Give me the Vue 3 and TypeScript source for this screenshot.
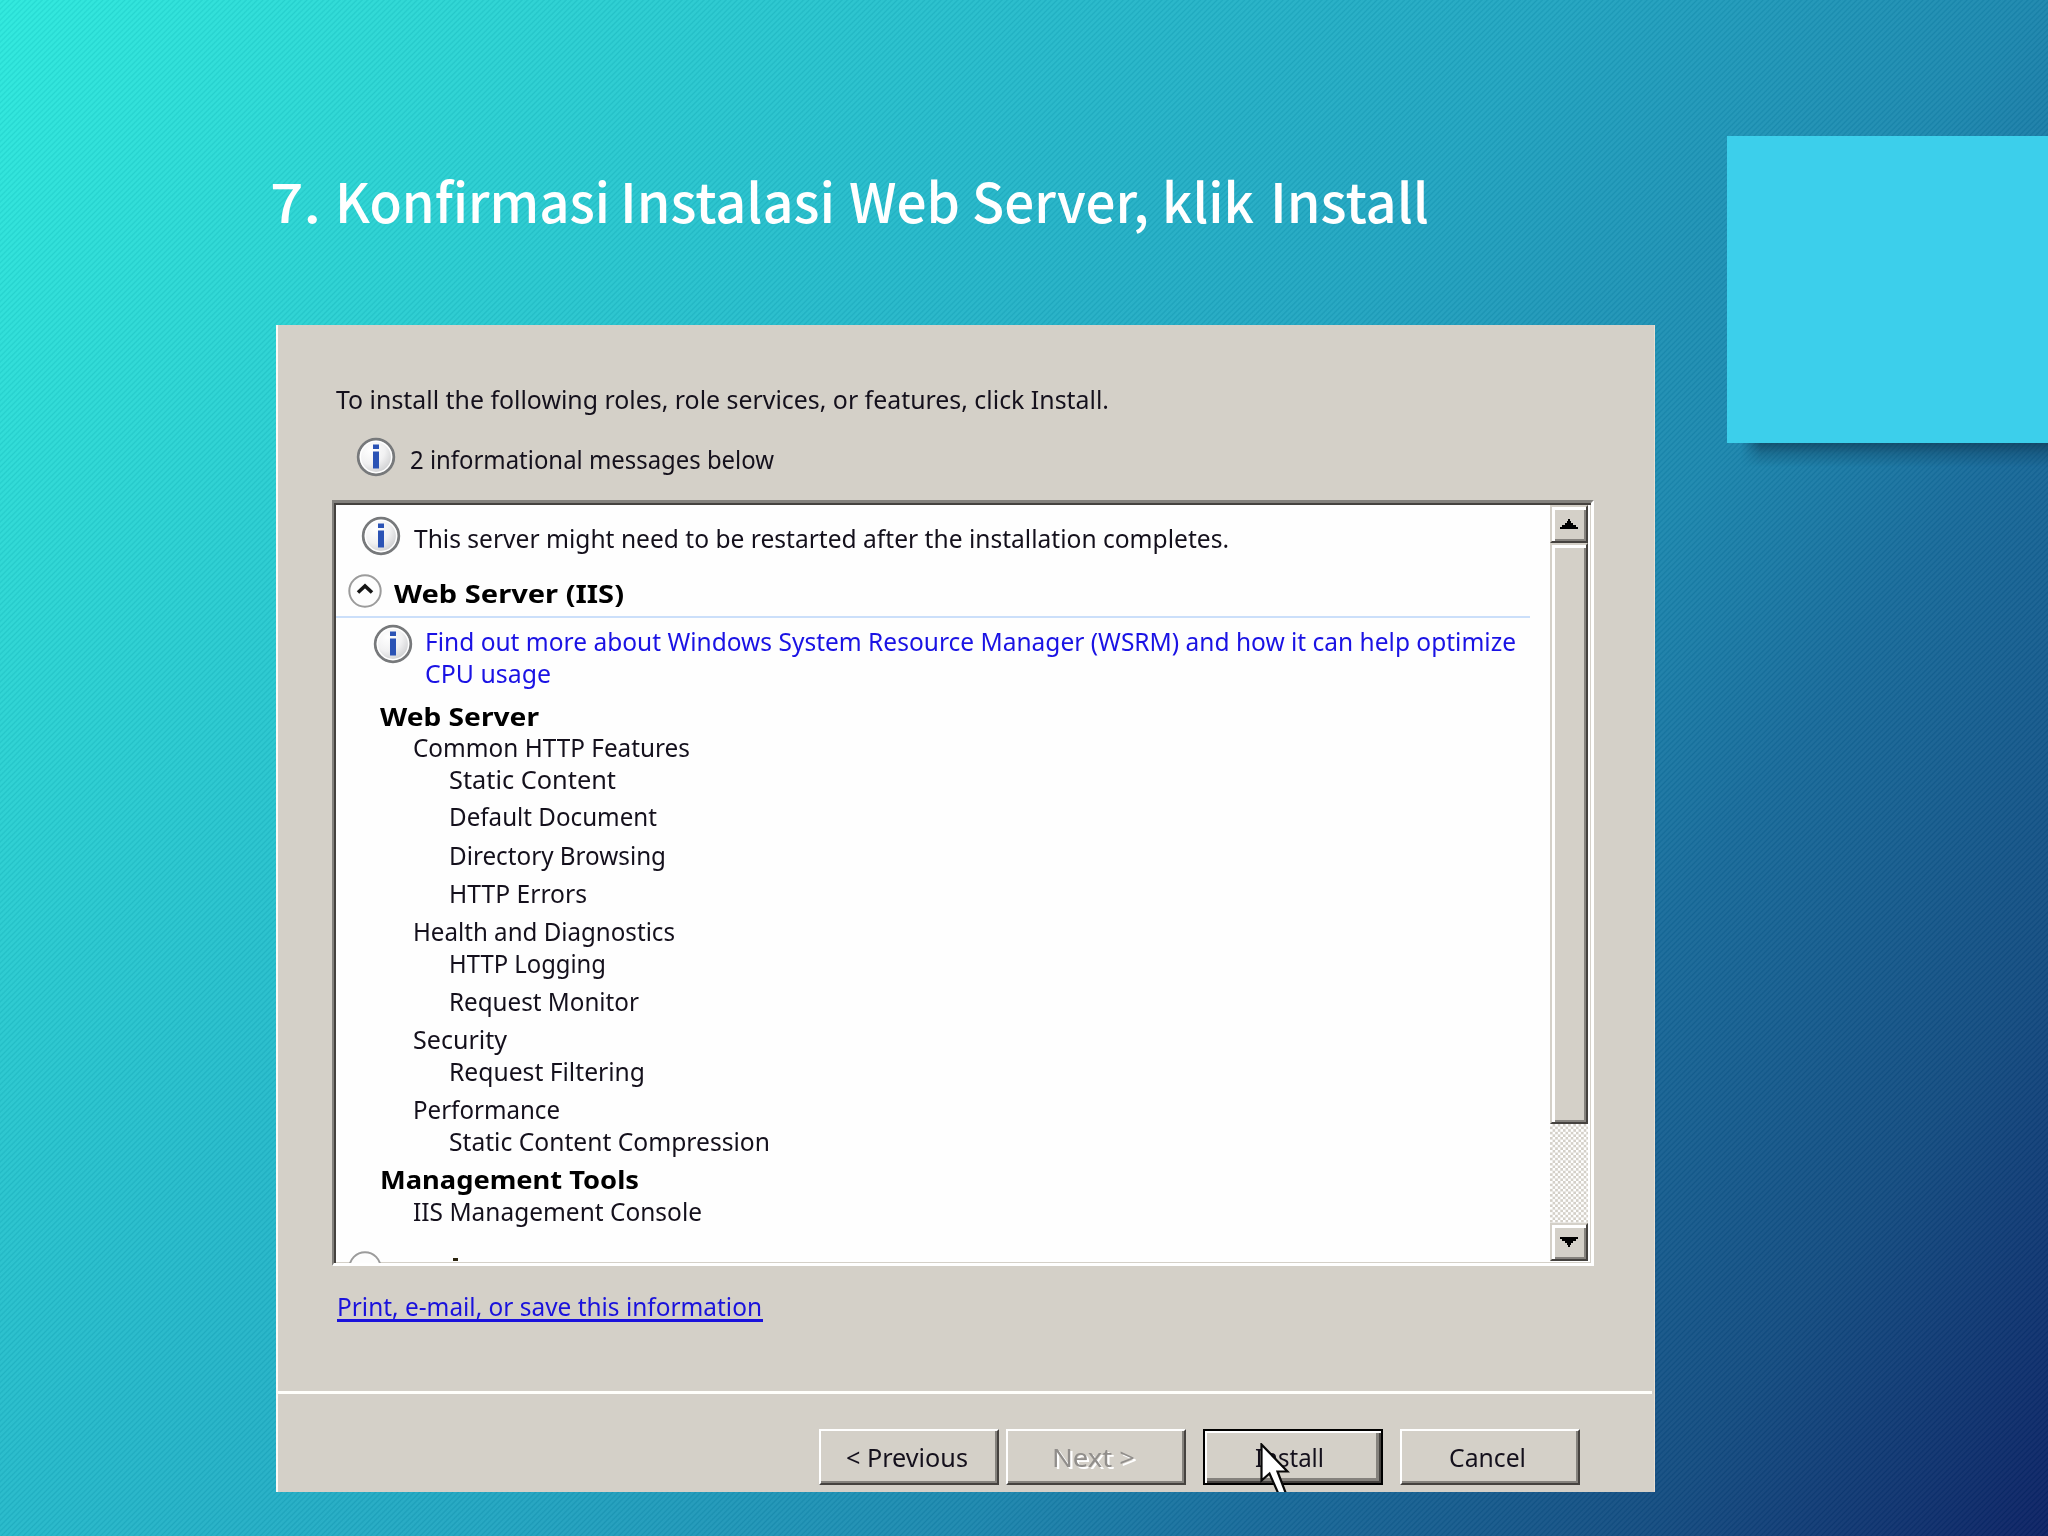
<script setup lang="ts">
import type { Directive } from 'vue'

interface Row {
  text: string
  width: number
  kind: 'group' | 'section' | 'leaf'
  tight?: boolean
}

interface Word {
  text: string
  width: number
  gap: number
}

// Stretches a single line of text to the given width in pixels.
const vFit: Directive<HTMLElement, number> = {
  mounted(el, binding) {
    const natural = el.getBoundingClientRect().width
    if (natural > 0) {
      el.style.transform = `scaleX(${binding.value / natural})`
      el.style.marginRight = `${binding.value - natural}px`
    }
  },
}

const heading: Word[] = [
  { text: '7.', width: 51, gap: 0 },
  { text: 'Konfirmasi', width: 275, gap: 14 },
  { text: 'Instalasi', width: 215, gap: 10 },
  { text: 'Web', width: 111, gap: 14 },
  { text: 'Server,', width: 177, gap: 12 },
  { text: 'klik', width: 92, gap: 13 },
  { text: 'Install', width: 159, gap: 16 },
]

const rows: Row[] = [
  { text: 'Common HTTP Features', width: 277, kind: 'section', tight: true },
  { text: 'Static Content', width: 167, kind: 'leaf', tight: true },
  { text: 'Default Document', width: 208, kind: 'leaf' },
  { text: 'Directory Browsing', width: 217, kind: 'leaf' },
  { text: 'HTTP Errors', width: 138, kind: 'leaf' },
  { text: 'Health and Diagnostics', width: 262, kind: 'section' },
  { text: 'HTTP Logging', width: 157, kind: 'leaf', tight: true },
  { text: 'Request Monitor', width: 190, kind: 'leaf' },
  { text: 'Security', width: 94, kind: 'section' },
  { text: 'Request Filtering', width: 196, kind: 'leaf', tight: true },
  { text: 'Performance', width: 147, kind: 'section' },
  { text: 'Static Content Compression', width: 321, kind: 'leaf', tight: true },
  { text: 'Management Tools', width: 259, kind: 'group' },
  { text: 'IIS Management Console', width: 289, kind: 'section', tight: true },
]
</script>

<template>
  <div class="slide">
    <svg class="defs" width="0" height="0">
      <defs>
        <radialGradient id="glass" cx="0.35" cy="0.3" r="0.8">
          <stop offset="0" stop-color="#ffffff" />
          <stop offset="0.5" stop-color="#f1f1f2" />
          <stop offset="1" stop-color="#c3c4c6" />
        </radialGradient>
        <symbol id="info" viewBox="0 0 40 40">
          <circle cx="20" cy="20" r="17.8" fill="url(#glass)" stroke="#77797b" stroke-width="2.8" />
          <circle cx="20" cy="20" r="15.6" fill="none" stroke="#ffffff" stroke-width="1.4" />
          <path d="M17 7.500h6v4.500h-6zM17 14.500h6v17h-6z" fill="#2b53b5" />
        </symbol>
      </defs>
    </svg>

    <h1 class="title">
      <div v-for="word in heading" :key="word.text" :style="{ marginLeft: word.gap + 'px' }">
        <span v-fit="word.width">{{ word.text }}</span>
      </div>
    </h1>
    <div class="accent"></div>

    <main class="dialog">
      <p class="lead"><span v-fit="773">To install the following roles, role services, or features, click Install.</span></p>
      <div class="notice">
        <svg class="info"><use href="#info" /></svg>
        <span v-fit="364">2 informational messages below</span>
      </div>

      <section class="box">
        <div class="content">
          <div class="restart">
            <svg class="info"><use href="#info" /></svg>
            <span v-fit="815">This server might need to be restarted after the installation completes.</span>
          </div>
          <div class="role">
            <svg class="chevron" viewBox="0 0 34 34">
              <circle cx="17" cy="17" r="15.700" fill="#fdfdfd" stroke="#9b9b9b" stroke-width="2" />
              <path d="M10 18.500l7-6.500 7 6.500" fill="none" stroke="#151515" stroke-width="3.600" />
            </svg>
            <span v-fit="230">Web Server (IIS)</span>
          </div>
          <div class="link-note">
            <svg class="info"><use href="#info" /></svg>
            <div class="lines">
              <div><span v-fit="1091">Find out more about Windows System Resource Manager (WSRM) and how it can help optimize</span></div>
              <div><span v-fit="126">CPU usage</span></div>
            </div>
          </div>
          <div class="rows">
            <div class="row group first"><span v-fit="159">Web Server</span></div>
            <div v-for="row in rows" :key="row.text" class="row" :class="[row.kind, { tight: row.tight }]">
              <span v-fit="row.width">{{ row.text }}</span>
            </div>
          </div>
          <div class="next-role">
            <svg class="chevron" viewBox="0 0 34 34">
              <circle cx="17" cy="17" r="15.700" fill="#fdfdfd" stroke="#9b9b9b" stroke-width="2" />
            </svg>
            <i class="speck"></i>
          </div>
        </div>
        <div class="scrollbar">
          <div class="raised arrow">
            <svg viewBox="0 0 18 10"><path d="M0 10V8h2V6h3V4h2V2h1V0h2v2h1v2h2v2h3v2h2v2z" /></svg>
          </div>
          <div class="raised thumb"></div>
          <div class="track"></div>
          <div class="raised arrow">
            <svg viewBox="0 0 18 10"><path d="M0 0v2h2v2h3v2h2v2h1v2h2V8h1V6h2V4h3V2h2V0z" /></svg>
          </div>
        </div>
      </section>

      <p class="print"><a><span v-fit="425">Print, e-mail, or save this information</span></a></p>

      <footer class="actions">
        <button class="btn prev"><span v-fit="122">&lt; Previous</span></button>
        <button class="btn next"><span v-fit="83">Next &gt;</span></button>
        <button class="btn install">
          <span v-fit="69">Install</span>
          <svg class="cursor" viewBox="0 0 30 49">
            <path
              d="M1.500 1.500V37.500L9.500 30.500L19 52H26.500L17.500 28.500H27.500Z"
              fill="#fff"
              stroke="#080808"
              stroke-width="2.200"
            />
          </svg>
        </button>
        <button class="btn cancel"><span v-fit="77">Cancel</span></button>
      </footer>
    </main>
  </div>
</template>

<style>
body {
  margin: 0;
  overflow: hidden;
}
</style>

<style scoped>
.slide {
  position: relative;
  box-sizing: border-box;
  width: 2048px;
  height: 1536px;
  padding-left: 276px;
  overflow: hidden;
  background:
    repeating-linear-gradient(135deg, rgba(255, 255, 255, 0.045) 0 1.3px, rgba(0, 50, 80, 0.07) 2.6px, rgba(255, 255, 255, 0.045) 3.9px),
    linear-gradient(125deg, #2ae9dd 0%, #29d7d4 13%, #23b9ca 34%, #1fa4c0 50%, #1a87ae 65%, #166a9a 74%, #124b80 87%, #0a1f62 100%);
  font-family: "Noto Sans", "Open Sans", sans-serif;
}
.defs {
  position: absolute;
}
span {
  display: inline-block;
  white-space: nowrap;
  transform-origin: 0 50%;
}
p {
  margin: 0;
}
.title {
  display: flex;
  height: 325px;
  margin: 0 0 0 -6px;
  padding: 160px 0 0 0;
  box-sizing: border-box;
  color: #fff;
  font: 500 54px/80px "Noto Sans CJK SC", "Open Sans", sans-serif;
}
.title div {
  flex: none;
}
.accent {
  position: absolute;
  top: 136px;
  right: 0;
  width: 321px;
  height: 307px;
  background: #3ccfeb;
}
.accent::before {
  content: "";
  position: absolute;
  left: 14px;
  right: -30px;
  top: 307px;
  height: 24px;
  background: linear-gradient(rgba(15, 55, 80, 0.65), rgba(15, 55, 80, 0.28) 45%, transparent);
  -webkit-mask-image: linear-gradient(90deg, transparent, #000 20px);
  mask-image: linear-gradient(90deg, transparent, #000 20px);
}
.dialog {
  display: flex;
  flex-direction: column;
  box-sizing: border-box;
  width: 1379px;
  height: 1167px;
  border-left: 2px solid #fbfaf6;
  border-right: 1px solid #e9dfd2;
  background: #d4d0c8;
  color: #14101c;
  font-size: 25.5px;
  line-height: 32px;
  overflow: hidden;
}
.dialog > * {
  flex: none;
}
.lead {
  padding: 58px 0 0 58px;
  height: 32px;
}
.info {
  flex: none;
  width: 40px;
  height: 40px;
}
.notice {
  display: flex;
  gap: 14px;
  height: 40px;
  margin: 22px 0 0 78px;
}
.notice span {
  height: 32px;
  margin-top: 6px;
}
.box {
  display: flex;
  box-sizing: border-box;
  width: 1262px;
  height: 766px;
  margin: 23px 0 0 54px;
  background: #fefefe;
  border: solid;
  border-width: 3px 3px 3px 2px;
  border-color: #83817d #fff #fff #83817d;
  box-shadow: inset 2px 2px #45423f, inset -1px -1px #d4d0c8;
}
.content {
  flex: none;
  width: 1216px;
  height: 758px;
  overflow: hidden;
  padding-top: 2px;
}
.restart {
  display: flex;
  gap: 13px;
  height: 67px;
  padding: 11px 0 0 27px;
  box-sizing: border-box;
}
.restart span {
  margin-top: 6px;
}
.role {
  display: flex;
  gap: 12px;
  box-sizing: border-box;
  width: 1194px;
  height: 46px;
  margin-left: 2px;
  padding: 2px 0 0 12px;
  border-bottom: 2px solid #cbdffa;
  font-weight: 700;
  color: #000;
}
.chevron {
  flex: none;
  width: 34px;
  height: 34px;
}
.role span {
  margin-top: 3px;
}
.link-note {
  display: flex;
  gap: 12px;
  height: 82px;
  padding: 7px 0 0 39px;
  box-sizing: border-box;
  color: #1a12e4;
}
.link-note .info {
  margin-top: -1px;
}
.lines {
  padding-top: 1px;
  line-height: 31.5px;
}
.rows {
  line-height: 32px;
}
.row {
  box-sizing: border-box;
  height: 38.3px;
  padding-top: 6.3px;
}
.row.tight {
  height: 31.5px;
  padding-top: 0;
}
.row.first {
  height: 31px;
  padding-top: 0;
}
.group {
  padding-left: 46px;
  font-weight: 700;
  color: #000;
}
.section {
  padding-left: 79px;
}
.leaf {
  padding-left: 115px;
}
.next-role {
  display: flex;
  padding: 25px 0 0 14px;
}
.speck {
  width: 5px;
  height: 3px;
  margin: 7px 0 0 71px;
  background: #2c2510;
}
.scrollbar {
  display: flex;
  flex: none;
  flex-direction: column;
  width: 38px;
  height: 758px;
  padding-top: 2px;
}
.raised {
  box-sizing: border-box;
  background: #d4d0c8;
  border: 2px solid;
  border-color: #d4d0c8 #45423f #45423f #d4d0c8;
  box-shadow: inset 3px 3px #fff, inset -2px -2px #85827d;
}
.arrow {
  display: flex;
  align-items: center;
  justify-content: center;
  flex: none;
  height: 38px;
}
.arrow svg {
  width: 18px;
  height: 10px;
  fill: #000;
}
.thumb {
  height: 581px;
}
.track {
  height: 99px;
  background: repeating-conic-gradient(#d4d0c8 0 25%, #fff 0 50%) 0 0 / 5.2px 5.2px;
}
.print {
  height: 32px;
  margin: 24px 0 0 59px;
  color: #1a12dc;
}
.print a {
  display: block;
  box-sizing: border-box;
  width: 426px;
  height: 32px;
  border-bottom: 3px solid #1a12dc;
}
.actions {
  display: flex;
  align-items: flex-start;
  box-sizing: border-box;
  height: 100px;
  margin: 69px 2px 0 0;
  padding: 35px 0 0 541px;
  border-top: 3px solid #fffffb;
}
.btn {
  position: relative;
  box-sizing: border-box;
  flex: none;
  width: 180px;
  height: 56px;
  margin: 0 7px 0 0;
  padding: 0;
  border: 2px solid;
  border-color: #fff #45423f #45423f #fff;
  border-radius: 0;
  background: #d4d0c8;
  box-shadow: inset -2px -2px #85827d;
  color: #14101c;
  font: inherit;
  text-align: left;
}
.prev {
  padding-left: 25px;
}
.next {
  padding-left: 44px;
  margin-right: 17px;
  color: #918e8b;
  text-shadow: 2px 2px #fff;
}
.install {
  margin-right: 17px;
  padding-left: 50px;
  border-color: #000;
  box-shadow: inset 2px 2px #fff, inset -2px -2px #45423f, inset -5px -5px #85827d;
}
.cancel {
  padding-left: 47px;
}
.cursor {
  position: absolute;
  left: 55px;
  top: 12px;
  width: 30px;
  height: 49px;
}
</style>
